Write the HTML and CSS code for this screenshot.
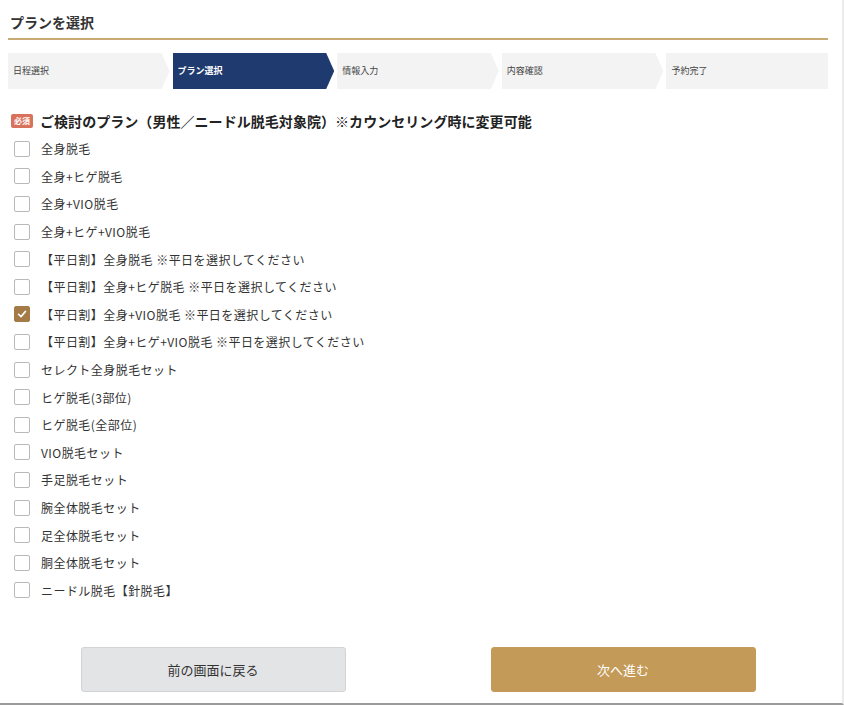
FILE: index.html
```html
<!DOCTYPE html>
<html lang="ja">
<head>
<meta charset="utf-8">
<title>プランを選択</title>
<link rel="stylesheet" href="styles.css">
</head>
<body>
<div class="page">
  <div class="content">
    <h1 class="title">プランを選択</h1>
    <ol class="steps">
      <li class="step">日程選択</li>
      <li class="step active">プラン選択</li>
      <li class="step">情報入力</li>
      <li class="step">内容確認</li>
      <li class="step last">予約完了</li>
    </ol>
    <div class="question">
      <span class="badge">必須</span>
      <span class="qtext">ご検討のプラン（男性／ニードル脱毛対象院）※カウンセリング時に変更可能</span>
    </div>
    <ul class="options">
      <li class="option"><span class="box"></span><span class="label">全身脱毛</span></li>
      <li class="option"><span class="box"></span><span class="label">全身+ヒゲ脱毛</span></li>
      <li class="option"><span class="box"></span><span class="label">全身+VIO脱毛</span></li>
      <li class="option"><span class="box"></span><span class="label">全身+ヒゲ+VIO脱毛</span></li>
      <li class="option"><span class="box"></span><span class="label">【平日割】全身脱毛 ※平日を選択してください</span></li>
      <li class="option"><span class="box"></span><span class="label">【平日割】全身+ヒゲ脱毛 ※平日を選択してください</span></li>
      <li class="option"><span class="box checked"><svg viewBox="0 0 16 16" width="16" height="16"><path d="M4 8.3 L6.9 11 L12 5" fill="none" stroke="#fff" stroke-width="1.8" stroke-linecap="round" stroke-linejoin="round"/></svg></span><span class="label">【平日割】全身+VIO脱毛 ※平日を選択してください</span></li>
      <li class="option"><span class="box"></span><span class="label">【平日割】全身+ヒゲ+VIO脱毛 ※平日を選択してください</span></li>
      <li class="option"><span class="box"></span><span class="label">セレクト全身脱毛セット</span></li>
      <li class="option"><span class="box"></span><span class="label">ヒゲ脱毛(3部位)</span></li>
      <li class="option"><span class="box"></span><span class="label">ヒゲ脱毛(全部位)</span></li>
      <li class="option"><span class="box"></span><span class="label">VIO脱毛セット</span></li>
      <li class="option"><span class="box"></span><span class="label">手足脱毛セット</span></li>
      <li class="option"><span class="box"></span><span class="label">腕全体脱毛セット</span></li>
      <li class="option"><span class="box"></span><span class="label">足全体脱毛セット</span></li>
      <li class="option"><span class="box"></span><span class="label">胴全体脱毛セット</span></li>
      <li class="option"><span class="box"></span><span class="label">ニードル脱毛【針脱毛】</span></li>
    </ul>
    <div class="actions">
      <button class="btn back" type="button">前の画面に戻る</button>
      <button class="btn next" type="button">次へ進む</button>
    </div>
  </div>
</div>
</body>
</html>
```

FILE: styles.css
```css
* { box-sizing: border-box; }
html, body { margin: 0; padding: 0; background: #fff; }
body {
  font-family: "Noto Sans CJK JP", "Noto Sans", "Liberation Sans", sans-serif;
  color: #333;
}
.page {
  width: 844px;
  height: 705px;
  border-right: 2px solid #ececec;
  border-bottom: 2px solid #9b9b9b;
  overflow: hidden;
}
.content {
  padding: 12px 14px 0 8px;
}
.title {
  margin: 0;
  padding: 0 0 6px 2px;
  font-size: 14px;
  line-height: 20px;
  font-weight: 700;
  color: #333;
  border-bottom: 2px solid #c9a974;
}
.steps {
  list-style: none;
  margin: 13px 0 0;
  padding: 0;
  display: flex;
  gap: 3px;
  height: 36px;
}
.step {
  flex: 1;
  background: #f3f3f3;
  font-size: 9px;
  line-height: 36px;
  padding-left: 5px;
  color: #444;
  clip-path: polygon(0 0, calc(100% - 8px) 0, 100% 50%, calc(100% - 8px) 100%, 0 100%);
}
.step.active {
  background: #1e3a6e;
  color: #fff;
  font-weight: 700;
}
.step.last { clip-path: none; }
.question {
  margin-top: 22px;
  display: flex;
  align-items: center;
  height: 20px;
}
.badge {
  display: inline-block;
  width: 22px;
  height: 14px;
  margin-left: 3px;
  background: #d9725c;
  color: #fff;
  font-size: 8px;
  line-height: 14px;
  text-align: center;
  font-weight: 700;
  border-radius: 2px;
}
.qtext {
  margin-left: 7px;
  font-size: 14px;
  font-weight: 700;
  color: #222;
  letter-spacing: 0.05px;
}
.options {
  list-style: none;
  margin: 4px 0 0;
  padding: 0;
}
.option {
  display: flex;
  align-items: center;
  height: 27.6px;
}
.box {
  width: 16px;
  height: 16px;
  margin-left: 6px;
  border: 1px solid #b9b9b9;
  border-radius: 2px;
  background: #fff;
  display: flex;
  align-items: center;
  justify-content: center;
}
.box.checked {
  background: #a47b47;
  border-color: #a47b47;
}
.box svg { display: block; }
.label {
  margin-left: 11px;
  font-size: 12px;
  color: #333;
  letter-spacing: 0.45px;
}
.actions {
  margin-top: 43px;
  display: flex;
  justify-content: center;
  gap: 145px;
}
.btn {
  width: 265px;
  height: 45px;
  font-family: inherit;
  font-size: 13px;
  border-radius: 3px;
  cursor: pointer;
}
.btn.back {
  background: #e3e4e6;
  border: 1px solid #d3d3d5;
  color: #333;
}
.btn.next {
  background: #c39a57;
  border: 1px solid #c39a57;
  color: #fff;
}
```
